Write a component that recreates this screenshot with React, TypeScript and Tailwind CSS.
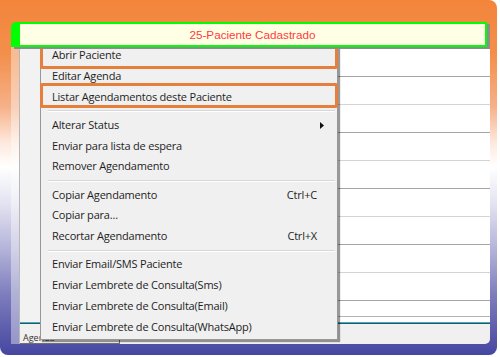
import React from "react";

type Item = { label: string; shortcut?: string; sub?: boolean } | "sep";

const menuItems: Item[] = [
  { label: "Abrir Paciente" },
  { label: "Editar Agenda" },
  { label: "Listar Agendamentos deste Paciente" },
  "sep",
  { label: "Alterar Status", sub: true },
  { label: "Enviar para lista de espera" },
  { label: "Remover Agendamento" },
  "sep",
  { label: "Copiar Agendamento", shortcut: "Ctrl+C" },
  { label: "Copiar para..." },
  { label: "Recortar Agendamento", shortcut: "Ctrl+X" },
  "sep",
  { label: "Enviar Email/SMS Paciente" },
  { label: "Enviar Lembrete de Consulta(Sms)" },
  { label: "Enviar Lembrete de Consulta(Email)" },
  { label: "Enviar Lembrete de Consulta(WhatsApp)" },
];

// grid lines alternate dark / light
const rows = [30, 28, 28, 28, 28, 28, 28, 28, 28];

export default function App() {
  return (
    <div className="relative w-[500px] h-[357px] bg-white overflow-hidden" style={{ fontFamily: "'Open Sans', 'Noto Sans', sans-serif" }}>
      <div className="w-[497px] h-[355px] rounded-tr-[8px] rounded-b-[8px] pt-[22px] pl-[11px] pr-[7px] pb-[11px] flex bg-[linear-gradient(to_bottom,#f2853a_0%,#f38f4b_15%,#f6b088_30%,#fde8dc_40%,#ffffff_47%,#e4e4f2_57%,#b4b4da_70%,#7d7dbd_83%,#4546a0_100%)]">
        <div className="flex-1 flex flex-col rounded-tl-[5px] rounded-br-[5px] overflow-hidden">
          {/* selected header cell */}
          <div className="relative z-10 mr-[3px] h-[25px] bg-[#ffffe6] border-2 border-l-[9px] border-[#00ff00] rounded-tl-[4px] shadow-[3px_2px_0_#8c8c8c] flex items-center justify-center text-[11.7px] text-[#ff3b3b]" style={{ fontFamily: "'Liberation Sans', Arial, sans-serif" }}>
            25-Paciente Cadastrado
          </div>
          <div className="flex-1 flex">
            <div className="w-[9px] bg-white/40 border-r border-[#b8b8b8]" />
            <div className="flex-1 flex flex-col">
              <div className="flex-1 flex bg-white">
                <div className="w-[20px] bg-[#f2f2f2]" />
                <div className="flex-1 flex flex-col">
                  {rows.map((h, i) => (
                    <div
                      key={i}
                      className={i % 2 === 0 ? "border-b border-[#a4a4a4]" : "border-b border-[#d4d4d4]"}
                      style={{ height: h }}
                    />
                  ))}
                  <div className="h-[16px] border-b border-[#b4b4b4]" />
                  <div className="h-[4px]" />
                </div>
              </div>
              <div className="h-[1px] bg-[#2fb3cc]" />
              <div className="h-[1px] bg-[#34525c]" />
              <div className="h-[20px] bg-[#f0f0f0] flex items-end">
                <div className="w-[100px] h-[12px] border-r border-b border-[#707070] text-[9px] leading-[10px] text-[#333] pl-[3px] pt-[1px]">
                  Agenda
                </div>
              </div>
            </div>
          </div>
        </div>
      </div>

      {/* context menu */}
      <div className="absolute left-[40px] top-[41px] w-[298px] bg-[#f0f0f0] border border-[#979797] shadow-[2px_2px_1px_rgba(0,0,0,0.4)] pt-[3px] pb-[2px] text-[11px] tracking-[-0.2px] text-[#1e1e1e]">
        {menuItems.map((it, i) =>
          it === "sep" ? (
            <div key={i} className="h-[7.5px] flex items-center pl-[7px] pr-[2px]">
              <div className="w-full h-[2px] border-t border-[#d7d7d7] border-b border-b-white" />
            </div>
          ) : (
            <div key={i} className="h-[20.75px] flex items-center pl-[11px] pr-[20px]">
              <span className="flex-1">{it.label}</span>
              {it.shortcut && <span>{it.shortcut}</span>}
              {it.sub && (
                <svg width="4" height="7" viewBox="0 0 4 7" className="mr-[-7px]">
                  <path d="M0 0 L4 3.5 L0 7 Z" fill="#111" />
                </svg>
              )}
            </div>
          )
        )}
      </div>

      {/* highlight annotations */}
      <div className="absolute left-[40px] top-[42px] w-[298px] h-[27px] border-[3px] border-[#e57f3b] rounded-[2px]" />
      <div className="absolute left-[40px] top-[83px] w-[298px] h-[25px] border-[3px] border-[#e57f3b] rounded-[2px]" />
    </div>
  );
}
